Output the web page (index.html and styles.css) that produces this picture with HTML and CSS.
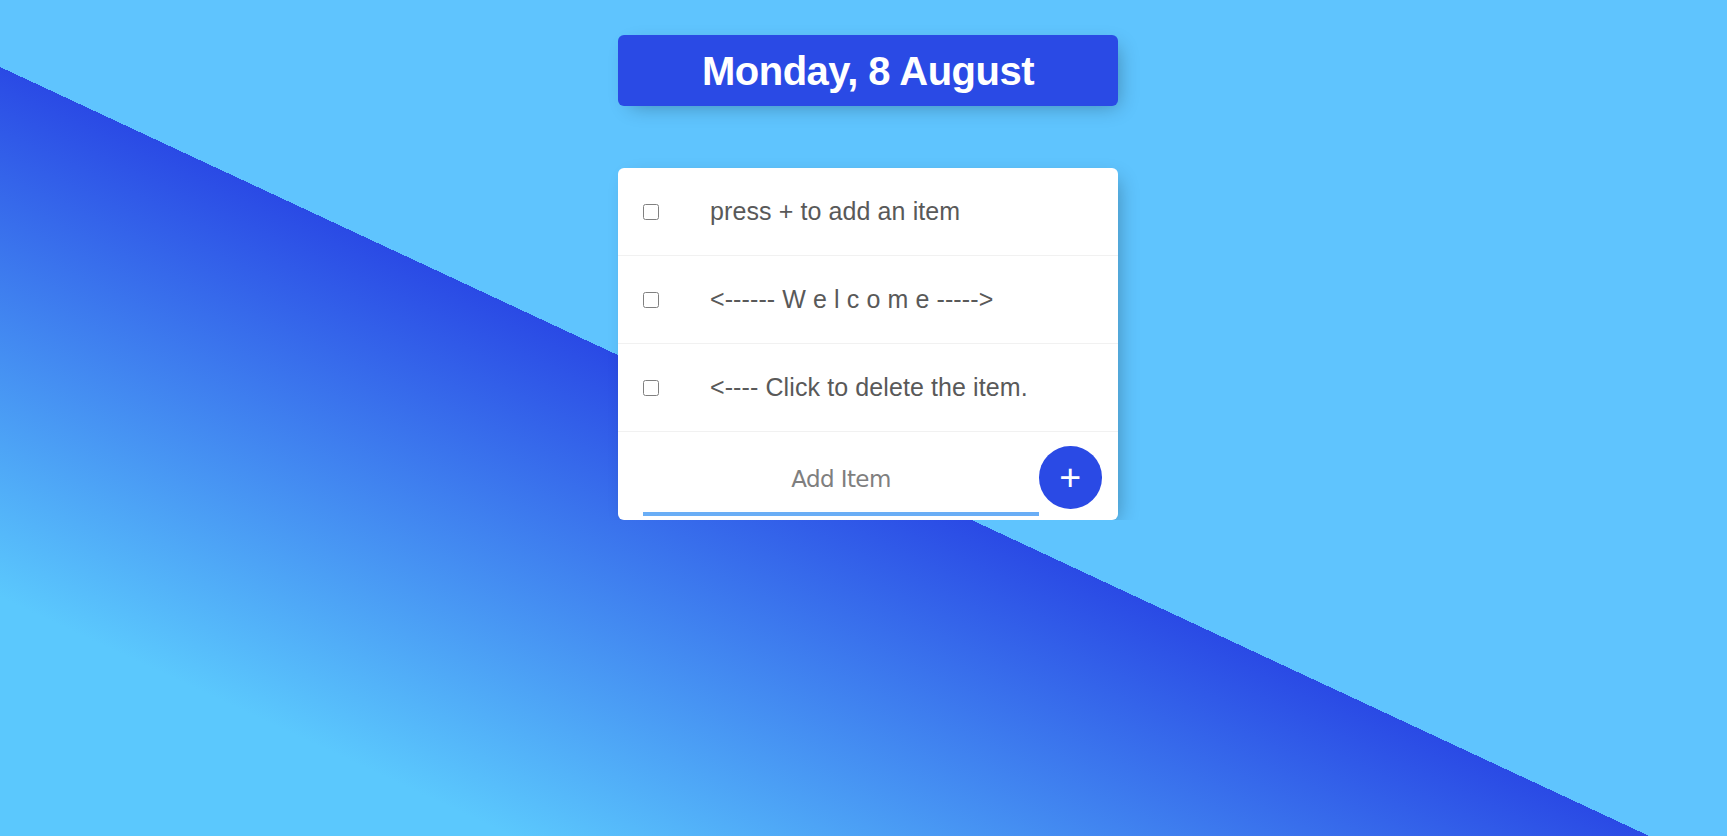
FILE: index.html
```html
<!DOCTYPE html>
<html lang="en">
<head>
<meta charset="utf-8">
<title>To-Do List</title>
<link rel="stylesheet" href="styles.css">
</head>
<body>
  <main class="page">
    <div class="box heading">
      <h1 class="title">Monday, 8 August</h1>
    </div>
    <div class="box list">
      <div class="item">
        <input type="checkbox" class="check">
        <p class="item-text">press + to add an item</p>
      </div>
      <div class="item">
        <input type="checkbox" class="check">
        <p class="item-text">&lt;------ W e l c o m e -----&gt;</p>
      </div>
      <div class="item">
        <input type="checkbox" class="check">
        <p class="item-text">&lt;---- Click to delete the item.</p>
      </div>
      <form class="add-form" onsubmit="return false">
        <input type="text" class="add-input" name="newItem" placeholder="Add Item" autocomplete="off">
        <button type="submit" class="add-btn">+</button>
      </form>
    </div>
  </main>
</body>
</html>
```

FILE: styles.css
```css
html {
  height: 100%;
  background-color: #5fc4fe;
  background-image: linear-gradient(25deg, #5bc8fd 216px, #2a4ae5 697px, #5fc4fe 697px);
}

body {
  margin: 0;
  font-family: "Liberation Sans", Arial, sans-serif;
}

.page {
  display: flex;
  flex-direction: column;
  align-items: center;
  padding: 35px 0 0 9px;
}

.box {
  width: 500px;
  border-radius: 6px;
  box-shadow: 6px 6px 19px -6px rgba(0, 0, 0, 0.3);
}

.heading {
  background-color: #2a4ae5;
  margin-bottom: 62px;
}

.title {
  margin: 0;
  padding: 12.5px;
  text-align: center;
  color: #fff;
  font-size: 40px;
  line-height: 46px;
  font-weight: 700;
  letter-spacing: -0.5px;
}

.list {
  background: #fff;
}

.item {
  display: flex;
  align-items: center;
  height: 87px;
  border-bottom: 1px solid #f1f1f1;
}

.check {
  appearance: none;
  -webkit-appearance: none;
  box-sizing: border-box;
  width: 16px;
  height: 16px;
  margin: 0 26px 0 25px;
  border: 1.5px solid #808080;
  border-radius: 2.5px;
  background: #fff;
  flex: none;
}

.item-text {
  margin: 0;
  padding: 0 25px;
  font-size: 25px;
  letter-spacing: 0.1px;
  color: #595959;
}

.add-form {
  display: flex;
  align-items: flex-start;
  box-sizing: border-box;
  height: 88px;
  padding: 9px 0 0 25px;
}

.add-input {
  box-sizing: border-box;
  width: 396px;
  height: 75px;
  padding: 0;
  margin: 0;
  border: none;
  background: transparent;
  text-align: center;
  font-family: "DejaVu Sans", Verdana, sans-serif;
  font-size: 23px;
  letter-spacing: -0.6px;
  color: #595959;
  outline: none;
  box-shadow: inset 0 -4px 0 0 #6aaef6;
}

.add-input::placeholder {
  color: #7f7f7f;
  opacity: 1;
}

.add-btn {
  flex: none;
  display: flex;
  align-items: center;
  justify-content: center;
  width: 62.5px;
  height: 62.5px;
  margin-top: 5px;
  padding: 0;
  border: 0;
  border-radius: 50%;
  background-color: #2a4ae5;
  color: #fff;
  font-family: "Liberation Sans", Arial, sans-serif;
  font-size: 37.5px;
  line-height: 1;
}
```
